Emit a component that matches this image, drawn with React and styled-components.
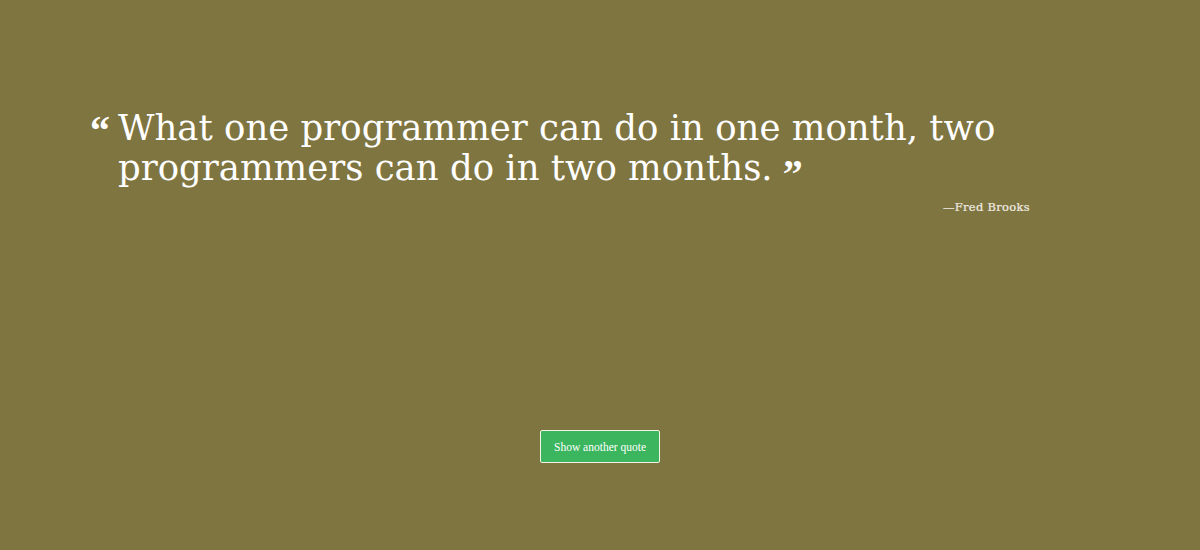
import React from "react";
import styled, { createGlobalStyle } from "styled-components";

const Global = createGlobalStyle`
  html, body { margin: 0; padding: 0; }
  body { background: #7f7541; font-family: "DejaVu Serif", "Liberation Serif", serif; }
`;

const Page = styled.div`
  width: 1200px;
  height: 550px;
  background: #7f7541;
  display: flex;
  flex-direction: column;
  overflow: hidden;
`;

const QuoteBox = styled.div`
  margin: 108px 0 0 90px;
  width: 940px;
  display: flex;
  flex-direction: column;
`;

const QuoteRow = styled.div`
  display: flex;
  align-items: flex-start;
`;

const OpenMark = styled.span`
  width: 28px;
  flex: none;
  font-family: "Liberation Serif", serif;
  font-size: 40px;
  line-height: 40px;
  font-weight: bold;
  color: #fff;
  margin-top: 3px;
`;

const QuoteText = styled.p`
  margin: 0;
  font-size: 35.5px;
  line-height: 40px;
  color: #fff;
`;

const CloseMark = styled.span`
  font-family: "Liberation Serif", serif;
  font-size: 40px;
  font-weight: bold;
  margin-left: 10px;
  vertical-align: -7px;
  line-height: 0;
`;

const Author = styled.div`
  align-self: flex-end;
  margin-top: 12px;
  font-size: 11.5px;
  color: #f1ece4;
  letter-spacing: 0.3px;
  -webkit-text-stroke: 0.2px #f1ece4;
`;

const ButtonRow = styled.div`
  display: flex;
  justify-content: center;
  margin-top: 216px;
`;

const Button = styled.button`
  width: 120px;
  height: 33px;
  background: #3bb55e;
  border: 1px solid #f3f3e6;
  border-radius: 2px;
  color: #fff;
  font-family: "Liberation Serif", serif;
  font-size: 11.5px;
  padding: 0;
  cursor: pointer;
`;

export default function App() {
  return (
    <Page>
      <Global />
      <QuoteBox>
        <QuoteRow>
          <OpenMark>“</OpenMark>
          <QuoteText>
            What one programmer can do in one month, two programmers can do in two months.
            <CloseMark>”</CloseMark>
          </QuoteText>
        </QuoteRow>
        <Author>—Fred Brooks</Author>
      </QuoteBox>
      <ButtonRow>
        <Button>Show another quote</Button>
      </ButtonRow>
    </Page>
  );
}
